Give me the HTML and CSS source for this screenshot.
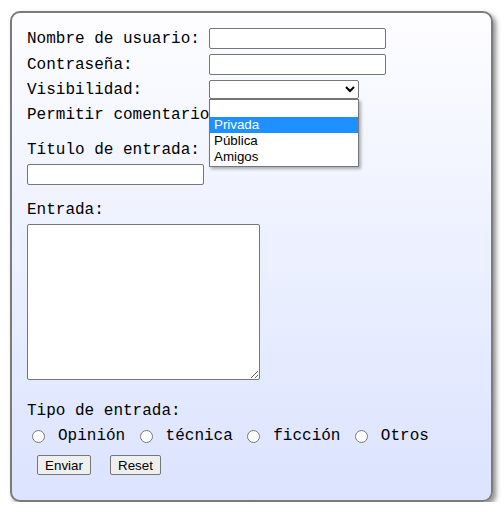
FILE: index.html
```html
<!DOCTYPE html>
<html lang="es">
<head>
<meta charset="utf-8">
<title>Entrada</title>
<link rel="stylesheet" href="styles.css">
</head>
<body>
<form class="form">
  <div class="grid">
    <label class="lbl" for="u">Nombre de usuario:</label>
    <input class="txt" id="u" type="text">
    <label class="lbl" for="p">Contraseña:</label>
    <input class="txt" id="p" type="password">
    <label class="lbl" for="v">Visibilidad:</label>
    <div class="sel-wrap">
      <select class="sel" id="v">
        <option></option>
        <option>Privada</option>
        <option>Pública</option>
        <option>Amigos</option>
      </select>
      <div class="listbox">
        <div class="opt">&nbsp;</div>
        <div class="opt active">Privada</div>
        <div class="opt">Pública</div>
        <div class="opt">Amigos</div>
      </div>
    </div>
    <label class="lbl row4" for="c">Permitir comentarios:</label>
    <div class="row4"><input id="c" type="checkbox" class="chk"></div>
  </div>

  <label class="lbl block title-lbl" for="t">Título de entrada:</label>
  <input class="txt title-in" id="t" type="text">

  <label class="lbl block entry-lbl" for="e">Entrada:</label>
  <textarea class="area" id="e"></textarea>

  <div class="lbl block type-lbl">Tipo de entrada:</div>
  <div class="radios">
    <input type="radio" name="tipo" class="rad" id="r1"><label class="lbl" for="r1">Opinión</label>
    <input type="radio" name="tipo" class="rad" id="r2"><label class="lbl" for="r2">técnica</label>
    <input type="radio" name="tipo" class="rad" id="r3"><label class="lbl" for="r3">ficción</label>
    <input type="radio" name="tipo" class="rad" id="r4"><label class="lbl" for="r4">Otros</label>
  </div>

  <div class="buttons">
    <button type="submit" class="btn">Enviar</button>
    <button type="reset" class="btn">Reset</button>
  </div>
</form>
</body>
</html>
```

FILE: styles.css
```css
html, body {
  margin: 0;
  padding: 0;
  background: #ffffff;
}

.form {
  box-sizing: border-box;
  margin: 11px 0 0 10px;
  width: 483px;
  height: 491px;
  padding: 15px 15px 0 15px;
  border: 2px solid #7b7b7b;
  border-radius: 10px;
  background: linear-gradient(to bottom, #fdfdff 0%, #dbe3fe 100%);
  box-shadow: 3px 3px 5px rgba(0, 0, 0, 0.45);
  display: flex;
  flex-direction: column;
  align-items: flex-start;
}

.lbl {
  font-family: "Liberation Mono", "Courier New", monospace;
  font-size: 16px;
  line-height: 18px;
  color: #000;
  white-space: nowrap;
}

.block {
  display: block;
}

.grid {
  display: grid;
  grid-template-columns: 182px auto;
  row-gap: 5px;
  align-items: center;
}

.txt {
  box-sizing: border-box;
  width: 177px;
  height: 21px;
  margin: 0;
  padding: 1px 2px;
  border: 1px solid #767676;
  border-radius: 2px;
  background: #fff;
  font-family: "Liberation Sans", Arial, sans-serif;
  font-size: 13.33px;
}

.sel-wrap {
  position: relative;
  width: 150px;
  height: 19px;
}

.sel {
  box-sizing: border-box;
  width: 150px;
  height: 19px;
  margin: 0;
  border: 1px solid #767676;
  border-radius: 2px;
  background: #fff;
  font-family: "Liberation Sans", Arial, sans-serif;
  font-size: 13.33px;
  display: block;
}

.listbox {
  position: absolute;
  left: 0;
  top: 19px;
  box-sizing: border-box;
  width: 150px;
  padding: 1px 0;
  border: 1px solid #767676;
  background: #fff;
  box-shadow: 2px 2px 3px rgba(0, 0, 0, 0.3);
  z-index: 5;
}

.opt {
  height: 16px;
  line-height: 16px;
  padding-left: 4px;
  font-family: "Liberation Sans", Arial, sans-serif;
  font-size: 13.33px;
  color: #000;
}

.opt.active {
  background: #1e90ff;
  color: #fff;
}

.row4 {
  height: 22px;
  display: flex;
  align-items: center;
}

.chk {
  margin: 0 0 0 4px;
}

.title-lbl {
  margin-top: 15px;
}

.title-in {
  margin-top: 5px;
}

.entry-lbl {
  margin-top: 16px;
}

.area {
  box-sizing: border-box;
  width: 233px;
  height: 156px;
  margin: 5px 0 0 0;
  border: 1px solid #767676;
  border-radius: 2px;
  background: #fff;
  resize: both;
}

.type-lbl {
  margin-top: 22px;
}

.radios {
  margin-top: 7px;
  display: flex;
  align-items: center;
  height: 18px;
}

.rad {
  width: 13px;
  height: 13px;
  margin: 1px 13px 0 5px;
}

.radios .lbl {
  margin-right: 9.4px;
}

.buttons {
  margin-top: 10px;
  margin-left: 10px;
  display: flex;
  gap: 19px;
}

.btn {
  box-sizing: border-box;
  height: 20px;
  padding: 1px 6px;
  margin: 0;
  border: 1px solid #767676;
  border-radius: 2px;
  background: #efefef;
  font-family: "Liberation Sans", Arial, sans-serif;
  font-size: 13.33px;
  color: #000;
}

.btn:first-child {
  width: 54px;
}

.btn:last-child {
  width: 51px;
}
```
